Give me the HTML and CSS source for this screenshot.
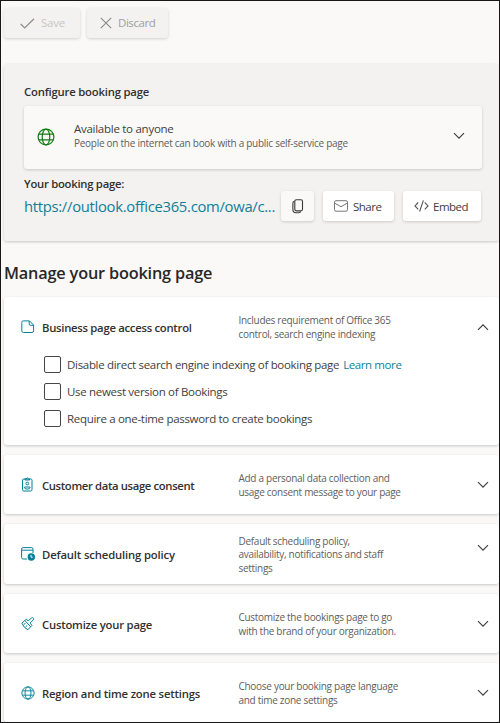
FILE: index.html
```html
<!DOCTYPE html>
<html lang="en">
<head>
<meta charset="utf-8">
<title>Booking page</title>
<link rel="stylesheet" href="styles.css">
</head>
<body>
<svg class="defs" width="0" height="0">
  <symbol id="globe" viewBox="0 0 18 18"><g fill="none" stroke="currentColor" stroke-width="1.2"><circle cx="9" cy="9" r="7.9"/><ellipse cx="9" cy="9" rx="3.8" ry="7.9"/><path d="M1.8 6.2h14.4M1.8 11.8h14.4"/></g></symbol>
  <symbol id="chevron" viewBox="0 0 12 8"><path d="M1 1.2l5 5 5-5" fill="none" stroke="currentColor" stroke-width="1.15"/></symbol>
</svg>
<main class="frame">
  <div class="toolbar">
    <button class="btn save"><svg width="15" height="11" viewBox="0 0 15 11"><path d="M.7 6l4 4L14 .8" fill="none" stroke="#8f8d8b" stroke-width="1.2"/></svg><span>Save</span></button>
    <button class="btn discard"><svg width="12" height="12" viewBox="0 0 12 12"><path d="M.8.8l10.4 10.4M11.2.8L.8 11.2" fill="none" stroke="#8f8d8b" stroke-width="1.2"/></svg><span>Discard</span></button>
  </div>
  <section class="config">
    <h2 class="label label-config">Configure booking page</h2>
    <div class="audience">
      <svg class="green" width="18" height="18"><use href="#globe"/></svg>
      <div class="audience-text">
        <p class="audience-title">Available to anyone</p>
        <p class="audience-desc">People on the internet can book with a public self-service page</p>
      </div>
      <svg class="chev" width="12" height="8"><use href="#chevron"/></svg>
    </div>
    <div class="link-row">
      <div class="link-block">
        <h2 class="label label-url">Your booking page:</h2>
        <a class="url">https://outlook.office365.com/owa/c...</a>
      </div>
      <button class="btn copy"><svg width="12" height="15" viewBox="0 0 12 15"><rect x="2.8" y=".7" width="7.7" height="11.2" rx="1.6" fill="none" stroke="#3b3a39" stroke-width="1.1"/><path d="M2.5 2.2Q.9 2.4.9 4.2v6.3q0 3.2 3 3.2h3q1.4 0 1.8-1.3" fill="none" stroke="#3b3a39" stroke-width="1.1"/></svg></button>
      <button class="btn share"><svg width="14" height="12" viewBox="0 0 14 12"><rect x=".5" y=".7" width="13" height="10.5" rx="1.5" fill="none" stroke="#777"/><path d="M.8 3.2L7 6.7l6.2-3.5" fill="none" stroke="#777"/></svg><span>Share</span></button>
      <button class="btn embed"><svg width="15" height="12" viewBox="0 0 15 12"><path d="M4.2 2.5L1 5.9l3.2 3.4M10.8 2.5L14 5.9l-3.2 3.4M9.4.4L5.6 11.5" fill="none" stroke="#555" stroke-width="1.1"/></svg><span>Embed</span></button>
    </div>
  </section>
  <h1 class="heading">Manage your booking page</h1>
  <div class="cards">
    <section class="card card-open">
      <div class="card-head">
        <svg class="icon" width="14" height="14" viewBox="0 0 14 14"><path d="M2.2.9h6.2l4.2 4.2v5.7q0 1.7-1.7 1.7H2.5Q.8 12.500.8 10.800V2.500Q.8.9 2.200.9zM8.200 1v3q0 1.300 1.300 1.300h3" fill="none" stroke="currentColor"/></svg>
        <h3 class="card-title t-access">Business page access control</h3>
        <p class="card-desc">Includes requirement of Office 365<br>control, search engine indexing</p>
        <svg class="chev up" width="12" height="8"><use href="#chevron"/></svg>
      </div>
      <div class="options">
        <label class="option"><span class="box"></span><span>Disable direct search engine indexing of booking page</span> <a class="learn">Learn more</a></label>
        <label class="option"><span class="box"></span><span>Use newest version of Bookings</span></label>
        <label class="option"><span class="box"></span><span>Require a one-time password to create bookings</span></label>
      </div>
    </section>
    <section class="card">
      <svg class="icon" width="14" height="15" viewBox="0 0 14 15"><g fill="none" stroke="currentColor"><rect x="1.500" y="2" width="9.500" height="12" rx="1.300"/><path d="M4 3V1.800h1.200Q6.250-.2 7.300 1.800h1.200V3z"/><circle cx="6.250" cy="6.500" r="1.400"/><path d="M3.500 10h5.500v.5q0 1.600-2.750 1.600T3.500 10.500z"/></g></svg>
      <h3 class="card-title t-consent">Customer data usage consent</h3>
      <p class="card-desc">Add a personal data collection and<br>usage consent message to your page</p>
      <svg class="chev" width="12" height="8"><use href="#chevron"/></svg>
    </section>
    <section class="card card-policy">
      <svg class="icon" width="14" height="14" viewBox="0 0 14 14"><path d="M6 12H2.200Q.6 12 .6 10.400V2.200Q.6.6 2.200.6h8.300Q12 .6 12 2.200V6M.6 3.200H12" fill="none" stroke="currentColor"/><circle cx="10.300" cy="10" r="3.700" fill="currentColor"/><path d="M10 7.900v2.300h1.700" fill="none" stroke="#fff"/></svg>
      <h3 class="card-title t-policy">Default scheduling policy</h3>
      <p class="card-desc">Default scheduling policy,<br>availability, notifications and staff<br>settings</p>
      <svg class="chev" width="12" height="8"><use href="#chevron"/></svg>
    </section>
    <section class="card">
      <svg class="icon" width="14" height="14" viewBox="0 0 14 14"><path d="M.8 6.200L5.200 2.300l1.900 1.500L10.600.9q1.400-.7 2 .5.300.9-.4 1.600L9 6.100l2 2.200-4.100 4.400Q3.200 11.300.8 6.200zM4 3.600l5.600 6.200M2.700 7.500l1.800-1.200M4.500 10l1.700-1.500" fill="none" stroke="currentColor"/></svg>
      <h3 class="card-title t-custom">Customize your page</h3>
      <p class="card-desc">Customize the bookings page to go<br>with the brand of your organization.</p>
      <svg class="chev" width="12" height="8"><use href="#chevron"/></svg>
    </section>
    <section class="card">
      <svg class="icon" width="14" height="14"><use href="#globe"/></svg>
      <h3 class="card-title t-region">Region and time zone settings</h3>
      <p class="card-desc">Choose your booking page language<br>and time zone settings</p>
      <svg class="chev" width="12" height="8"><use href="#chevron"/></svg>
    </section>
  </div>
</main>
</body>
</html>
```
FILE: styles.css
```css
* { box-sizing: border-box; }
body { margin: 0; font-family: "Open Sans", "Noto Sans", sans-serif; font-size: 11.5px; color: #403e3d; }
h1, h2, h3, p { margin: 0; }
svg { display: block; flex: none; }
.defs { position: absolute; }
.frame { width: 500px; height: 723px; border: 1px solid #171717; background: #faf9f8; padding: 7px 0 0 3px; overflow: hidden; }
.toolbar { display: flex; gap: 7px; height: 56px; }
.btn { display: flex; align-items: center; height: 30px; border: 0; border-radius: 3px; padding: 0; background: #fff; box-shadow: 0 1px 3px rgba(0,0,0,.17); font: 11.5px "Open Sans", sans-serif; letter-spacing: -.5px; color: #403e3d; white-space: nowrap; }
.toolbar .btn { background: #f3f2f1; color: #a19f9d; }
.toolbar .btn span { margin-top: -1px; }
.toolbar .save { width: 76px; padding-left: 16px; gap: 6px; color: #c8c6c4; letter-spacing: -.2px; }
.toolbar .discard { width: 81px; padding-left: 13px; gap: 6px; letter-spacing: -.45px; }
.config { height: 177px; padding: 19px 17px 0 20px; background: #f3f2f1; border-radius: 3px; box-shadow: 0 1px 3px rgba(0,0,0,.2); }
.label { font-size: 11.3px; font-weight: 600; line-height: 18px; letter-spacing: -.2px; color: #323130; white-space: nowrap; }
.label-url { letter-spacing: -.27px; }
.audience { display: flex; align-items: center; height: 63px; margin-top: 5px; padding: 0 17px 0 13px; background: #faf9f8; border-radius: 3px; box-shadow: 0 1px 3px rgba(0,0,0,.18); }
.green { color: #107c10; margin-top: -2px; }
.audience-text { flex: 1; margin-left: 19px; margin-top: -4px; white-space: nowrap; }
.audience-title { font-size: 11.5px; line-height: 15px; letter-spacing: -.27px; }
.audience-desc { font-size: 10px; line-height: 15px; letter-spacing: -.27px; color: #605e5c; }
.chev { color: #403e3d; }
.audience .chev { margin-top: -4px; }
.link-row { display: flex; align-items: flex-start; padding-top: 6px; }
.link-block { width: 257px; white-space: nowrap; }
.url { display: block; font-size: 14.8px; line-height: 27px; letter-spacing: -.29px; color: #0f7f99; }
.link-row .btn { margin-top: 16px; }
.copy { width: 33px; justify-content: center; background: #faf9f8; }
.share { width: 71px; margin-left: 9px; padding-left: 11px; gap: 5px; }
.embed { width: 78px; margin-left: 9px; padding-left: 11px; gap: 4px; }
.heading { height: 56px; padding-top: 20px; font-size: 16.3px; line-height: 24px; letter-spacing: -.18px; font-weight: 600; color: #292827; white-space: nowrap; }
.cards { display: grid; gap: 10px; }
.card { display: flex; align-items: center; height: 59px; padding: 0 10px 0 17px; background: #fff; border-radius: 3px; box-shadow: 0 1px 3px rgba(0,0,0,.2); }
.card-open { display: block; height: 148px; }
.card-head { display: flex; align-items: center; height: 59px; }
.card-policy { height: 60px; }
.icon { color: #038099; }
.card-title { width: 196.5px; margin-left: 7px; font-size: 11.3px; line-height: 16px; font-weight: 600; color: #323130; padding-top: 2px; white-space: nowrap; }
.t-access { letter-spacing: -.28px; }
.t-consent { letter-spacing: -.36px; }
.t-policy { letter-spacing: -.15px; }
.t-custom { letter-spacing: -.22px; }
.t-region { letter-spacing: -.19px; }
.card-desc { flex: 1; font-size: 10px; line-height: 13.3px; letter-spacing: -.29px; color: #605e5c; padding-top: 2px; white-space: nowrap; }
.up { transform: rotate(180deg); }
.card-policy .chev { margin-top: -12px; }
.options { padding-left: 23px; display: grid; gap: 10px; }
.option { display: flex; align-items: center; height: 17px; font-size: 11.5px; letter-spacing: -.31px; white-space: nowrap; }
.box { width: 17px; height: 17px; margin-right: 6px; border: 1px solid #484644; border-radius: 2px; background: #fff; }
.learn { margin-left: 4px; letter-spacing: -.4px; color: #0f7f99; }
```
